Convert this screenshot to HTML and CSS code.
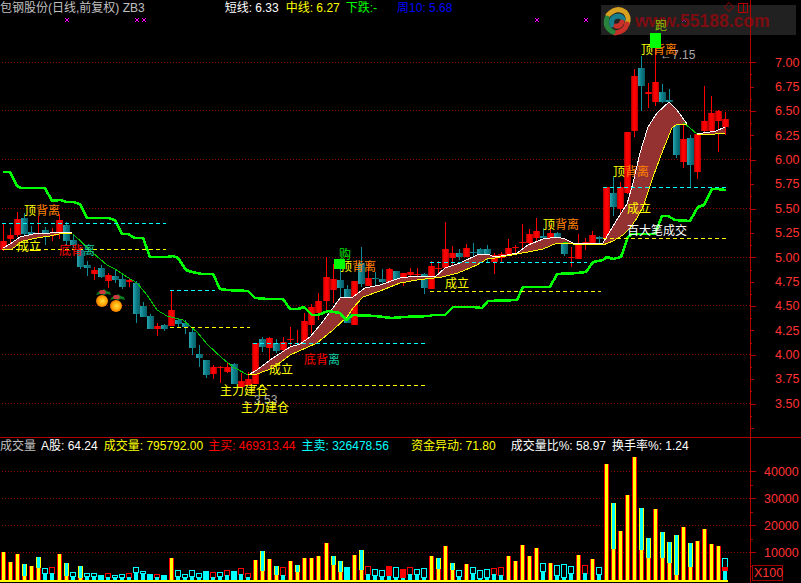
FILE: index.html
```html
<!DOCTYPE html>
<html lang="zh-CN">
<head>
    <meta charset="UTF-8">
    <meta name="viewport" content="width=device-width, initial-scale=1.0">
    <title>包钢股份 ZB3</title>
    <link rel="stylesheet" href="styles.css">
</head>
<body>

    <div class="screen">
        <div class="pane price-pane">
            <svg id="priceChart" class="chart" width="801" height="438" viewBox="0 0 801 438"></svg>
            <div class="legend price-legend">
                <span class="title">包钢股份(日线,前复权) ZB3</span>
                <span class="white item-short">短线: 6.33</span>
                <span class="yellow item-mid">中线: 6.27</span>
                <span class="green item-down">下跌:-</span>
                <span class="blue item-week">周10: 5.68</span>
            </div>
        </div>

        <div class="pane volume-pane">
            <svg id="volumeChart" class="chart" width="801" height="145" viewBox="0 438 801 145"></svg>
            <div class="legend volume-legend">
                <span class="title">成交量</span>
                <span class="white item-a">A股: 64.24</span>
                <span class="yellow item-vol">成交量: 795792.00</span>
                <span class="red item-buy">主买: 469313.44</span>
                <span class="cyan item-sell">主卖: 326478.56</span>
                <span class="yellow item-flow">资金异动: 71.80</span>
                <span class="white item-ratio">成交量比%: 58.97</span>
                <span class="white item-turn">换手率%: 1.24</span>
            </div>
        </div>
    </div>

    <script src="chart.js"></script>

</body>
</html>
```

FILE: styles.css
```css
body {
    margin: 0;
    background-color: #000;
    font-family: "Liberation Sans", "Noto Sans CJK SC", sans-serif;
    font-size: 12px;
}

.screen {
    width: 801px;
    height: 583px;
    overflow: hidden;
    display: flex;
    flex-direction: column;
}

.pane {
    position: relative;
}

.chart {
    display: block;
}

.chart text {
    font-family: "Liberation Sans", "Noto Sans CJK SC", sans-serif;
    font-size: 12px;
    dominant-baseline: central;
}

.chart .axis-label {
    fill: #ff3232;
    font-size: 12.5px;
}

.chart .watermark {
    fill: #7d0c10;
    font-size: 17.5px;
    font-weight: bold;
}

.crisp {
    shape-rendering: crispEdges;
}

/* legends sit on top of the charts */
.legend {
    position: absolute;
    left: 0;
    display: flex;
    white-space: nowrap;
    line-height: 16px;
}

.price-legend {
    top: 0;
}

.volume-legend {
    top: 0;
}

.title {
    color: #c0c0c0;
}

.white {
    color: #fff;
}

.yellow {
    color: #ff0;
}

.green {
    color: #0f0;
}

.blue {
    color: #00f;
}

.red {
    color: #f00;
}

.cyan {
    color: #0ff;
}

.item-short {
    margin-left: 80px;
}

.item-mid {
    margin-left: 7px;
}

.item-down {
    margin-left: 6px;
}

.item-week {
    margin-left: 20px;
}

.item-a {
    margin-left: 5px;
}

.item-vol {
    margin-left: 6px;
}

.item-buy {
    margin-left: 5px;
}

.item-sell {
    margin-left: 6px;
}

.item-flow {
    margin-left: 22px;
}

.item-ratio {
    margin-left: 15px;
}

.item-turn {
    margin-left: 6px;
}
```

FILE: chart.js
```js
const priceChart = document.getElementById('priceChart');
const volumeChart = document.getElementById('volumeChart');

const COLORS = {
    yellow: '#ffff00',
    orange: '#ff8000',
    red: '#ff0000',
    teal: '#14c8a0',
    green: '#00ff00',
    white: '#ffffff',
    cyan: '#00ffff',
    grid: '#8c0000',
    axis: '#b40000'
};

const AXIS_X = 750;

// day number -> pixel column of the wick
function dayX(i) {
    return Math.round(3 + 7.011 * i);
}

// [type, high, bodyTop, bodyBottom, low], all in screen pixels
const candles = [
    ['r', 223, 241, 250, 251], ['r', 228, 235, 239, 243], ['r', 212, 219, 235, 237], ['t', 213, 218, 234, 240],
    ['t', 226, 232, 235, 240], ['r', 216, 233, 235, 236], ['t', 227, 230, 234, 245], ['r', 228, 233, 236, 241],
    ['r', 214, 220, 232, 239], ['t', 222, 225, 241, 245], ['t', 235, 240, 245, 248], ['t', 247, 250, 267, 269],
    ['t', 261, 265, 268, 276], ['r', 267, 270, 274, 280], ['t', 265, 268, 277, 278], ['r', 273, 275, 281, 288],
    ['t', 270, 276, 280, 283], ['t', 275, 279, 287, 289], ['r', 278, 280, 282, 287], ['t', 281, 283, 314, 323],
    ['t', 302, 306, 317, 317], ['t', 314, 316, 329, 329], ['r', 323, 326, 329, 336], ['t', 324, 325, 329, 331],
    ['r', 291, 310, 326, 326], ['t', 318, 320, 324, 327], ['t', 320, 323, 327, 334], ['t', 327, 332, 348, 355],
    ['t', 345, 354, 358, 367], ['t', 360, 360, 375, 378], ['r', 365, 367, 374, 379], ['r', 366, 367, 368, 383],
    ['r', 362, 367, 372, 373], ['t', 363, 364, 384, 384], ['r', 373, 381, 387, 387], ['r', 372, 379, 385, 385],
    ['r', 343, 343, 384, 384], ['t', 337, 339, 347, 352], ['r', 337, 338, 348, 360], ['t', 339, 343, 351, 353],
    ['r', 337, 342, 350, 352], ['r', 327, 339, 340, 350], ['r', 330, 343, 344, 344], ['r', 313, 321, 344, 344],
    ['r', 304, 307, 325, 333], ['r', 293, 301, 313, 320], ['r', 257, 277, 301, 311], ['r', 264, 279, 290, 303],
    ['t', 268, 280, 288, 297], ['t', 285, 289, 323, 323], ['r', 281, 281, 325, 325], ['t', 247, 263, 284, 287],
    ['r', 261, 278, 286, 286], ['t', 272, 278, 279, 292], ['t', 269, 279, 282, 290], ['r', 268, 269, 282, 282],
    ['t', 271, 271, 282, 282], ['r', 273, 273, 278, 286], ['r', 268, 272, 275, 277], ['r', 268, 274, 275, 277],
    ['t', 273, 274, 288, 294], ['r', 261, 266, 289, 289], ['r', 261, 268, 269, 275], ['r', 222, 249, 268, 270],
    ['r', 246, 253, 258, 268], ['t', 249, 253, 257, 260], ['r', 244, 248, 257, 257], ['t', 243, 252, 253, 258],
    ['t', 248, 249, 254, 258], ['t', 245, 249, 254, 263], ['r', 253, 255, 262, 274], ['r', 252, 254, 258, 262],
    ['r', 239, 248, 255, 255], ['r', 245, 247, 248, 253], ['r', 224, 242, 243, 253], ['r', 229, 234, 243, 250],
    ['r', 218, 231, 238, 245], ['t', 228, 236, 238, 242], ['r', 225, 233, 238, 240], ['t', 232, 233, 237, 238],
    ['t', 243, 243, 254, 256], ['r', 247, 257, 258, 267], ['r', 234, 245, 259, 259], ['r', 238, 242, 245, 250],
    ['r', 231, 235, 244, 244], ['t', 236, 237, 239, 243], ['r', 187, 187, 238, 238], ['t', 176, 193, 207, 216],
    ['r', 182, 187, 209, 215], ['r', 132, 132, 193, 194], ['r', 69, 76, 131, 137], ['t', 56, 68, 86, 111],
    ['r', 83, 92, 94, 108], ['r', 47, 82, 102, 106], ['t', 84, 92, 102, 103], ['t', 89, 100, 102, 103],
    ['t', 125, 125, 155, 158], ['r', 122, 139, 162, 168], ['t', 135, 138, 165, 188], ['r', 133, 134, 172, 179],
    ['r', 86, 121, 131, 133], ['r', 96, 113, 131, 133], ['r', 110, 111, 121, 152], ['r', 112, 119, 127, 135]
];

// Y = red/yellow stripes, YC = cyan top over stripes, C = solid cyan,
// RO / CO = hollow top over a cyan stub, R = solid red over a stub
const volumes = [
    ['Y', 552], ['Y', 562], ['Y', 554], ['YC', 564, 576], ['Y', 566], ['YC', 557, 568], ['CO', 568, 573], ['RO', 567, 573],
    ['Y', 554], ['YC', 563, 576], ['CO', 572, 576], ['YC', 566, 578], ['CO', 573, 576], ['CO', 573, 576], ['C', 575], ['RO', 573, 577],
    ['CO', 575, 577], ['CO', 574, 577], ['RO', 573, 577], ['CO', 567, 572], ['CO', 571, 573], ['C', 574], ['RO', 574, 577], ['C', 575],
    ['Y', 558], ['CO', 570, 576], ['CO', 574, 577], ['CO', 570, 576], ['CO', 573, 577], ['C', 571], ['RO', 572, 577], ['CO', 572, 576],
    ['RO', 570, 575], ['C', 571], ['RO', 568, 574], ['RO', 573, 577], ['Y', 560], ['YC', 551, 571], ['Y', 559], ['YC', 566, 575],
    ['RO', 567, 575], ['Y', 561], ['YC', 565, 572], ['Y', 558], ['Y', 558], ['Y', 556], ['Y', 543], ['YC', 556, 565],
    ['YC', 561, 572], ['C', 567], ['Y', 555], ['YC', 550, 570], ['RO', 566, 574], ['CO', 569, 575], ['CO', 570, 576], ['R', 566, 576],
    ['CO', 567, 577], ['R', 569, 578], ['RO', 567, 574], ['CO', 569, 574], ['CO', 568, 577], ['Y', 556], ['YC', 558, 569], ['Y', 546],
    ['YC', 563, 570], ['CO', 570, 576], ['Y', 564], ['CO', 567, 573], ['CO', 570, 578], ['CO', 569, 577], ['RO', 568, 574], ['RO', 567, 575],
    ['Y', 556], ['Y', 561], ['Y', 545], ['Y', 556], ['Y', 548], ['CO', 563, 571], ['Y', 563], ['CO', 565, 575],
    ['CO', 564, 577], ['CO', 566, 573], ['Y', 555], ['RO', 565, 573], ['Y', 559], ['CO', 567, 574], ['Y', 464], ['YC', 503, 549],
    ['Y', 531], ['Y', 495], ['Y', 457], ['YC', 508, 550], ['YC', 538, 558], ['Y', 509], ['YC', 532, 558], ['YC', 542, 563],
    ['YC', 535, 575], ['Y', 527], ['YC', 543, 567], ['Y', 541], ['Y', 529], ['Y', 544], ['Y', 546], ['CR', 558, 567, 571]
];

const supportLine = [
    [3, 172], [10, 172], [17, 186], [21, 188], [45, 188], [52, 201], [60, 200], [67, 202], [73, 202], [80, 204], [87, 218],
    [108, 218], [115, 220], [122, 234], [128, 234], [135, 238], [143, 238], [150, 257], [167, 257], [173, 256], [178, 258],
    [186, 270], [192, 272], [202, 274], [213, 274], [220, 289], [227, 290], [248, 291], [255, 298], [268, 299], [283, 299],
    [290, 309], [298, 309], [304, 307], [312, 315], [318, 315], [328, 311], [340, 313], [346, 320], [353, 315], [375, 316],
    [392, 318], [403, 317], [430, 316], [432, 315], [445, 315], [453, 307], [473, 307], [482, 308], [488, 301], [517, 300],
    [523, 287], [550, 287], [557, 274], [578, 273], [586, 272], [593, 262], [603, 260], [607, 257], [613, 259], [621, 257],
    [628, 237], [632, 234], [655, 234], [662, 216], [668, 216], [675, 220], [690, 221], [698, 207], [704, 205], [712, 189],
    [717, 189], [726, 190]
];

// thin green parts of the short line, where it runs below the mid line
const thinLines = [
    [[73, 234], [93, 253], [107, 265], [115, 269], [127, 277], [137, 283], [147, 295], [157, 310], [167, 316], [183, 320],
     [197, 332], [207, 344], [222, 358], [233, 367], [248, 375]],
    [[563, 242], [573, 244]],
    [[683, 122], [690, 128], [697, 134]]
];

const bands = [
    {
        upper: [[3, 248], [10, 244], [20, 237], [33, 234], [50, 233], [63, 232], [72, 233]],
        lower: [[3, 250], [12, 249], [23, 241], [37, 238], [50, 236], [63, 233], [72, 234]]
    },
    {
        upper: [[248, 375], [257, 370], [273, 358], [290, 347], [300, 344], [310, 337], [320, 325], [330, 312], [340, 298],
                [353, 297], [365, 288], [380, 285], [400, 278], [417, 276], [435, 277], [445, 268], [460, 263], [477, 255],
                [487, 254], [495, 257], [507, 255], [517, 253], [528, 245], [543, 239], [557, 237], [565, 239], [573, 243],
                [590, 244], [603, 243], [613, 226], [618, 218], [627, 204], [633, 183], [640, 153], [648, 127], [657, 113],
                [669, 102], [677, 110], [687, 124]],
        lower: [[248, 375], [257, 374], [273, 368], [290, 355], [317, 343], [333, 330], [347, 317], [353, 308], [363, 297],
                [380, 291], [400, 283], [417, 280], [442, 277], [458, 273], [477, 265], [487, 259], [495, 258], [517, 254],
                [533, 251], [543, 249], [557, 243], [565, 243], [573, 244], [603, 245], [613, 241], [623, 235], [630, 228],
                [637, 218], [643, 207], [653, 177], [663, 150], [672, 128], [677, 124], [687, 124]]
    },
    {
        upper: [[697, 134], [716, 131], [725, 127]],
        lower: [[697, 134], [715, 134], [725, 133]]
    }
];

// [colour, y, from, to]
const dashes = [
    ['cyan', 223, 2, 166], ['yellow', 249, 2, 166],
    ['cyan', 290, 170, 215], ['yellow', 327, 170, 250],
    ['cyan', 343, 253, 426], ['yellow', 385, 253, 426],
    ['cyan', 262, 430, 587], ['yellow', 291, 430, 601],
    ['cyan', 187, 603, 727], ['yellow', 238, 603, 727]
];

const DIVERGE_TOP = [['顶', 'yellow'], ['背离', 'orange']];
const DIVERGE_BOTTOM = [['底背', 'red'], ['离', 'teal']];
const CONFIRMED = [['成立', 'yellow']];
const BUILD = [['主力建仓', 'yellow']];

const labels = [
    [24, 211, DIVERGE_TOP], [17, 247, CONFIRMED], [59, 251, DIVERGE_BOTTOM],
    [340, 267, DIVERGE_TOP], [304, 360, DIVERGE_BOTTOM], [269, 370, CONFIRMED],
    [242, 400, [['←3.53', 'gray']]], [220, 391, BUILD], [241, 408, BUILD],
    [445, 284, CONFIRMED], [543, 225, DIVERGE_TOP], [613, 172, DIVERGE_TOP],
    [627, 209, CONFIRMED], [627, 231, [['百大笔成交', 'white']]],
    [660, 55, [['←7.15', 'gray']]], [641, 50, DIVERGE_TOP]
];

function rect(x, y, w, h, fill) {
    return `<rect x="${x}" y="${y}" width="${w}" height="${h}" fill="${fill}"/>`;
}

function polyline(points, color, width) {
    return `<polyline class="crisp" points="${points.join(' ')}" fill="none" stroke="${color}" stroke-width="${width}"/>`;
}

function dottedLine(y, x2) {
    return `<line class="crisp" x1="2" y1="${y}" x2="${x2}" y2="${y}" stroke="${COLORS.grid}" stroke-dasharray="1 2"/>`;
}

function labelText(x, y, parts) {
    const spans = parts.map(([text, color]) => `<tspan fill="${COLORS[color] || '#a8a8a8'}">${text}</tspan>`).join('');
    return `<text x="${x}" y="${y}">${spans}</text>`;
}

function drawOrange(cx, cy) {
    return `
        <circle cx="${cx}" cy="${cy}" r="6" fill="url(#orangeFill)"/>
        <path d="M${cx - 6} ${cy - 6}l2 -3l4 -1l2 -2l3 2l3 1l1 3l-4 -1l-3 1l-4 -1z" fill="#0c7a20"/>
        <path d="M${cx - 3} ${cy - 10}l2 -1h3l2 2l-1 2h-5z" fill="#d03840"/>`;
}

function drawLogo() {
    return `
        <g fill="none" stroke-width="5" stroke-linecap="round">
            <path d="M608 15q9 -9 17 -3q5 5 2 12" stroke="#d8a020"/>
            <path d="M627 24q-2 8 -12 9" stroke="#c83028"/>
            <path d="M613 32q-9 -5 -6 -14" stroke="#28843c"/>
            <path d="M612 25q-2 -8 6 -9q4 0 5 3" stroke="#18808c"/>
            <path d="M622 22q-2 5 -6 4" stroke="#c83028"/>
        </g>`;
}

function drawPriceChart() {
    let svg = `
        <defs>
            <linearGradient id="redBody">
                <stop offset="0" stop-color="#a00000"/><stop offset="0.3" stop-color="#ff0000"/>
                <stop offset="0.7" stop-color="#ff0000"/><stop offset="1" stop-color="#b00000"/>
            </linearGradient>
            <linearGradient id="tealBody">
                <stop offset="0" stop-color="#2aa4ae"/><stop offset="0.5" stop-color="#0a7c86"/>
                <stop offset="1" stop-color="#0a5c66"/>
            </linearGradient>
            <radialGradient id="orangeFill" cx="0.55" cy="0.5" r="0.6">
                <stop offset="0" stop-color="#ffe040"/><stop offset="0.6" stop-color="#ffa000"/>
                <stop offset="1" stop-color="#e06000"/>
            </radialGradient>
        </defs>`;

    [62.5, 110.5, 159.5, 208.5, 257.5, 305.5, 354.5, 403.5].forEach(y => { svg += dottedLine(y, AXIS_X); });

    candles.forEach(([type, high, top, bottom, low], i) => {
        const x = dayX(i);
        const isRed = type === 'r';
        svg += rect(x, high, 1, low - high, isRed ? '#ff0000' : '#0e8c96');
        svg += rect(x - 3, top, 7, Math.max(bottom - top, 1), isRed ? 'url(#redBody)' : 'url(#tealBody)');
    });

    bands.forEach(band => {
        const outline = band.upper.concat(band.lower.slice().reverse());
        svg += `<polygon points="${outline.join(' ')}" fill="#943232"/>`;
    });
    thinLines.forEach(line => { svg += polyline(line, '#00c800', 1); });
    bands.forEach(band => {
        svg += polyline(band.upper, COLORS.white, 1);
        svg += polyline(band.lower, COLORS.yellow, 1);
    });
    svg += polyline(supportLine, COLORS.green, 2.6);

    dashes.forEach(([color, y, x1, x2]) => {
        svg += `<line class="crisp" x1="${x1}" y1="${y + 0.5}" x2="${x2}" y2="${y + 0.5}" stroke="${COLORS[color]}" stroke-dasharray="4 3"/>`;
    });

    // magenta marks along the top
    [67, 137, 144, 537, 586, 642, 684].forEach(x => {
        svg += `<path class="crisp" d="M${x - 2} 18l4 4m0 -4l-4 4" stroke="#ff00ff" stroke-width="1.4" fill="none"/>`;
    });

    svg += drawOrange(102, 301) + drawOrange(116, 306);

    // watermark, drawn see-through over the corner of the plot
    svg += rect(601, 5, 195, 30, 'rgba(60, 60, 60, 0.55)');
    svg += drawLogo();
    svg += `<text class="watermark" x="635" y="21">www.55188.com</text>`;
    svg += `<path d="M729 2.5l4.5 4.5l-4.5 4.5l-4.5 -4.5z" fill="none" stroke="#a00000"/>`;
    svg += `<path class="crisp" d="M738.5 3h9v9h-9zM743 3v9" fill="none" stroke="#b40000"/>`;

    labels.forEach(([x, y, parts]) => { svg += labelText(x, y, parts); });

    // buy and sell flags
    svg += rect(334, 259, 11, 10, COLORS.green);
    svg += `<text x="339" y="255" fill="#00e000">购</text>`;
    svg += rect(650, 33, 11, 15, COLORS.green);
    svg += `<text x="655" y="26" fill="#88c000">跑</text>`;

    // price axis
    svg += rect(AXIS_X, 0, 1, 438, COLORS.axis);
    svg += rect(0, 437, 801, 1, COLORS.axis);
    for (let n = 0; n <= 30; n++) {
        const y = Math.round(62.3 + n * 12.19);
        const len = n % 4 === 0 ? 6 : n % 2 === 0 ? 4 : 2;
        svg += rect(AXIS_X, y, len, 1, COLORS.axis);
    }
    ['7.00', '6.75', '6.50', '6.25', '6.00', '5.75', '5.50', '5.25', '5.00', '4.75', '4.50', '4.25', '4.00', '3.75', '3.50'].forEach((price, n) => {
        svg += `<text class="axis-label" x="775" y="${62.5 + n * 24.38}">${price}</text>`;
    });

    priceChart.innerHTML = svg;
}

function drawVolumeBar(item, i) {
    const [type, top, split, extra] = item;
    const x = dayX(i) - 2;
    const bottom = 580;
    let svg = '';

    if (type === 'Y' || type === 'YC') {
        svg += rect(x, top, 5, bottom - top, '#ff0000');
        svg += rect(x + 1, top, 3, bottom - top, '#ffff00');
        if (type === 'YC') {
            svg += rect(x, top, 5, split - top, '#ffff00');
            svg += rect(x + 1, top, 3, split - top, '#00ffff');
        }
    } else if (type === 'C') {
        svg += rect(x - 1, top, 6, bottom - top, '#00ffff');
    } else if (type === 'R') {
        svg += rect(x - 1, top, 6, split - top, '#ff0000');
        svg += rect(x, split, 4, bottom - split, '#00ffff');
    } else {
        const border = type === 'RO' ? '#ff0000' : '#00ffff';
        svg += `<rect class="crisp" x="${x - 0.5}" y="${top + 0.5}" width="5" height="${split - top}" fill="none" stroke="${border}"/>`;
        svg += rect(x, split, 4, bottom - split, '#00ffff');
        if (type === 'CR') {
            svg += rect(x - 1, split, 6, extra - split, '#ff0000');
        }
    }
    return svg;
}

function drawVolumeChart() {
    let svg = '';

    [471.5, 498.5, 525.5, 552.5].forEach(y => { svg += dottedLine(y, AXIS_X); });
    volumes.forEach((item, i) => { svg += drawVolumeBar(item, i); });
    svg += rect(0, 580, 728, 2, '#ffff00');

    svg += rect(AXIS_X, 438, 1, 145, COLORS.axis);
    for (let n = 0; n < 8; n++) {
        const y = Math.round(471.3 + n * 13.5);
        svg += rect(AXIS_X, y, n % 2 === 0 ? 6 : 3, 1, COLORS.axis);
    }
    ['40000', '30000', '20000', '10000'].forEach((value, n) => {
        svg += `<text class="axis-label" x="764" y="${471.5 + n * 27}">${value}</text>`;
    });

    svg += `<rect class="crisp" x="752.5" y="565.5" width="30" height="15" fill="none" stroke="#a00000"/>`;
    svg += `<text class="axis-label" x="754" y="573">X100</text>`;

    volumeChart.innerHTML = svg;
}

drawPriceChart();
drawVolumeChart();
```
